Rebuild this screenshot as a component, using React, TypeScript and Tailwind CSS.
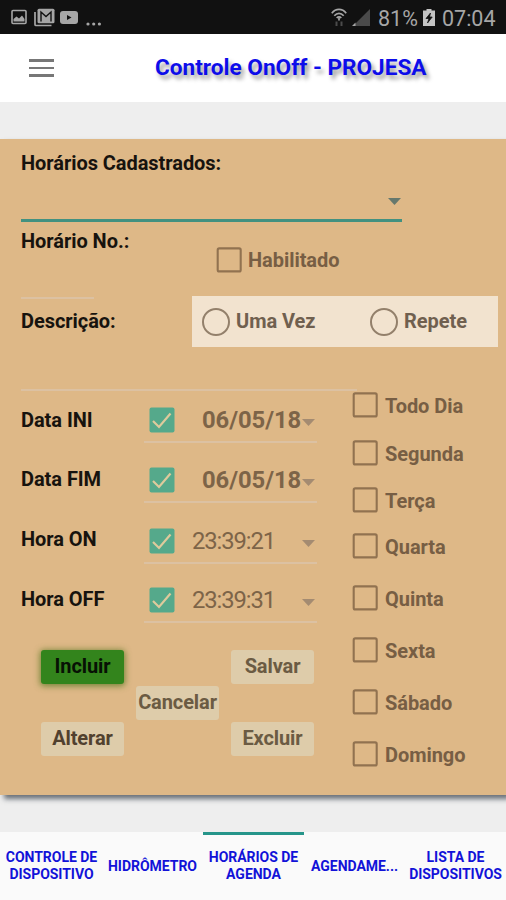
import React from 'react';
import clsx from 'clsx';

interface CheckBoxProps {
  checked?: boolean;
}

const CheckBox: React.FC<CheckBoxProps> = ({ checked }) => (
  <svg className="w-[26px] h-[26px] shrink-0" viewBox="0 0 26 26" fill="none">
    {checked ? (
      <>
        <rect x="0.5" y="0.5" width="25" height="25" rx="2" fill="#55a98b" />
        <path d="M4 14l6 6L21.5 6.5" stroke="#deca9c" strokeWidth="2.2" />
      </>
    ) : (
      <rect x="1.7" y="1.4" width="23" height="23" rx="1.5" stroke="#917250" strokeWidth="2.1" />
    )}
  </svg>
);

const Arrow: React.FC<{ className?: string }> = ({ className }) => (
  <svg className={clsx('w-[13px] h-[7px] shrink-0', className)} viewBox="0 0 13 7">
    <path d="M0 0h13L6.5 7z" fill="currentColor" />
  </svg>
);

const StatusBar: React.FC = () => (
  <div className="h-[34px] bg-[#111111] text-[#a6a6a6] flex items-center justify-between pl-[11px] pr-[10px]">
    <div className="flex items-center">
      {/* Picture */}
      <svg className="w-4 h-4" viewBox="0 0 16 16" fill="none">
        <rect x="1" y="1.5" width="14" height="13" rx="1" stroke="currentColor" strokeWidth="1.6" />
        <path d="M2.5 12.500V10l3-2.500L8 9.500l3-3L13.500 10v2.500z" fill="currentColor" />
      </svg>
      {/* Mail stack */}
      <svg className="w-[21px] h-[19px] ml-[7px]" viewBox="0 0 21 19" fill="none">
        <path d="M1 4v12.5a1 1 0 0 0 1 1h15.5" stroke="currentColor" strokeWidth="1.7" />
        <rect x="3.5" y="0.8" width="17" height="14.5" rx="1.5" fill="currentColor" />
        <path d="M7 13.500V4l5 4.500L17 4v9.500" stroke="#111111" strokeWidth="1.4" />
      </svg>
      {/* Video */}
      <svg className="w-[18px] h-[13px] ml-[5px]" viewBox="0 0 18 13">
        <rect width="18" height="13" rx="3" fill="currentColor" />
        <path d="M7 4v5l4.500-2.500z" fill="#111111" />
      </svg>
      <svg className="w-4 h-[14px] ml-[8px] mt-[4px]" viewBox="0 0 16 14" fill="currentColor">
        <circle cx="2" cy="12" r="1.6" />
        <circle cx="7.7" cy="12" r="1.6" />
        <circle cx="13.4" cy="12" r="1.6" />
      </svg>
    </div>
    <div className="flex items-center text-[21.5px] leading-none">
      {/* Wifi */}
      <svg className="w-4 h-[19px] mr-[5px]" viewBox="0 0 16 19" fill="none" stroke="currentColor" strokeWidth="1.7">
        <path d="M.8 5.2c4-5 10.400-5 14.400 0M3.300 7.800c2.800-3.200 6.600-3.200 9.400 0M5.700 10c1.400-1.500 3.200-1.500 4.600 0" />
        <path d="M8 9.500v3" />
        <path d="M5.500 18v-4.500M10.500 13.500V18" stroke="#4b4b4b" strokeWidth="2" />
      </svg>
      <svg className="w-[18px] h-[17px] mr-[8px]" viewBox="0 0 18 17">
        <path d="M18 0v17H1z" fill="#4a4a4a" />
        <path d="M3.500 13.500v3.500H0z" fill="#a6a6a6" />
      </svg>
      <span className="w-[39px] pt-1">81%</span>
      {/* Battery */}
      <svg className="w-3 h-[17px] ml-[6px] mr-[7px]" viewBox="0 0 12 17">
        <path d="M3.500 0h5v1.500H12V17H0V1.500h3.500z" fill="#c4c4c4" />
        <path d="M7.500 4L3 9.500h3L4.500 14 9.200 8H6.500z" fill="#111111" stroke="#111111" strokeWidth="0.8" />
      </svg>
      <span className="w-[54px] pt-1">07:04</span>
    </div>
  </div>
);

const PICKERS = [
  { label: 'Data INI', value: '06/05/18', time: false, row: 'h-[52px]', pad: 'pb-[11px]' },
  { label: 'Data FIM', value: '06/05/18', time: false, row: 'h-[60px]', pad: 'pb-[12px]' },
  { label: 'Hora ON', value: '23:39:21', time: true, row: 'h-[61px]', pad: 'pb-[13px]' },
  { label: 'Hora OFF', value: '23:39:31', time: true, row: 'h-[59px]', pad: 'pb-[12px]' },
];

const DAYS = [
  { name: 'Todo Dia', gap: 'mt-[1px]' },
  { name: 'Segunda', gap: 'mt-[22px]' },
  { name: 'Terça', gap: 'mt-[21px]' },
  { name: 'Quarta', gap: 'mt-[20px]' },
  { name: 'Quinta', gap: 'mt-[26px]' },
  { name: 'Sexta', gap: 'mt-[26px]' },
  { name: 'Sábado', gap: 'mt-[26px]' },
  { name: 'Domingo', gap: 'mt-[26px]' },
];

const TABS = ['CONTROLE DE DISPOSITIVO', 'HIDRÔMETRO', 'HORÁRIOS DE AGENDA', 'AGENDAME...', 'LISTA DE DISPOSITIVOS'];

interface ActionProps {
  label: string;
  className?: string;
}

const Action: React.FC<ActionProps> = ({ label, className }) => (
  <button className={clsx('w-[83px] h-[34px] rounded-[3px] font-bold text-[20px] tracking-[-0.100px] leading-none pb-0.5 whitespace-nowrap', className)}>
    {label}
  </button>
);

const App: React.FC = () => {
  return (
    <div className="w-[506px] h-[900px] bg-[#eeeeee] flex flex-col overflow-hidden font-['Roboto',sans-serif]">
      <StatusBar />

      <header className="h-[68px] bg-white flex items-center pl-[29px]">
        <button className="w-[25px] flex flex-col gap-[5px]">
          <span className="h-[2.500px] w-full bg-[#777777]" />
          <span className="h-[2.500px] w-full bg-[#777777]" />
          <span className="h-[2.500px] w-full bg-[#777777]" />
        </button>
        <h1 className="ml-[101px] text-[22.600px] font-bold text-[#0d0dea] whitespace-nowrap [text-shadow:3px_4px_4px_rgba(0,0,0,0.4)]">
          Controle OnOff - PROJESA
        </h1>
      </header>

      <main className="mt-[37px] h-[656px] bg-[#deb887] shadow-[4px_4px_5px_0px_rgba(60,70,80,0.75)] flex flex-col text-[20px] tracking-[-0.050px] leading-[24px] font-bold text-[#17130e]">
        {/* Registered schedules */}
        <section className="ml-[21px] w-[381px] h-[83px] pt-3 border-b-[3px] border-[#429180] flex flex-col">
          <span>Horários Cadastrados:</span>
          <Arrow className="self-end mt-[23px] mr-px text-[#66786d]" />
        </section>

        <section className="h-[126px] flex">
          <div className="w-[171px] ml-[21px] pt-[7px]">
            <div>Horário No.:</div>
            <div className="w-[73px] h-[2px] mt-[44px] bg-[#dcc1a2]" />
            <div className="mt-[10px]">Descrição:</div>
          </div>
          <div className="pt-[25px] text-[#775e44]">
            <label className="ml-[24px] flex items-center gap-[6px]">
              <CheckBox />
              Habilitado
            </label>
            <div className="mt-[23px] w-[306px] h-[51px] bg-[#f2e3cf] text-[#70604f] flex items-center pl-[10px]">
              <label className="w-[168px] flex items-center gap-[6px]">
                <span className="w-7 h-7 rounded-full border-2 border-[#93806b]" />
                <span className="pb-[2px]">Uma Vez</span>
              </label>
              <label className="flex items-center gap-[6px]">
                <span className="w-7 h-7 rounded-full border-2 border-[#93806b]" />
                <span className="pb-[2px]">Repete</span>
              </label>
            </div>
          </div>
        </section>

        <div className="ml-[21px] mt-[41px] w-[336px] h-[2px] bg-[#dcc1a2]" />

        <section className="flex">
          <div className="w-[352px]">
            {PICKERS.map((p) => (
              <div key={p.label} className={clsx('flex items-end pl-[21px]', p.row)}>
                <span className={clsx('w-[123px]', p.pad)}>{p.label}</span>
                <div className="w-[173px] h-[36px] border-b-2 border-[#dcc1a2] flex pl-[5px] pr-px text-[#7d6448]">
                  <CheckBox checked />
                  {p.time ? (
                    <span className="ml-[17px] mt-[1px] w-[110px] text-[23.800px] font-normal tracking-[-1.100px]">{p.value}</span>
                  ) : (
                    <span className="ml-[27px] mt-[1px] w-[100px] text-[23.800px] whitespace-nowrap">{p.value}</span>
                  )}
                  <Arrow className="mt-[12px] text-[#a48b71]" />
                </div>
              </div>
            ))}

            {/* Actions */}
            <div className="mt-[27px] ml-[41px] w-[273px] flex flex-col text-[#6b5b43]">
              <div className="flex justify-between">
                <Action label="Incluir" className="bg-[#33841c] text-[#071104] shadow-[0_1px_6px_1px_rgba(70,110,20,0.7)]" />
                <Action label="Salvar" className="bg-[#deccaa]" />
              </div>
              <Action label="Cancelar" className="bg-[#deccaa] ml-[95px] mt-[2px]" />
              <div className="mt-[2px] flex justify-between">
                <Action label="Alterar" className="bg-[#deccaa] text-[#51412f]" />
                <Action label="Excluir" className="bg-[#deccaa]" />
              </div>
            </div>
          </div>

          <div className="flex flex-col text-[#775e44]">
            {DAYS.map((day) => (
              <label key={day.name} className={clsx('flex items-center gap-[7px] h-[26px]', day.gap)}>
                <CheckBox />
                <span className="pt-[1px]">{day.name}</span>
              </label>
            ))}
          </div>
        </section>
      </main>

      <nav className="mt-auto h-[68px] pl-px bg-[#fafafa] grid grid-cols-5 text-[14px] leading-[17px] tracking-[-0.030px] font-bold text-[#1212d8] text-center">
        {TABS.map((tab, i) => (
          <button
            key={tab}
            className={clsx('flex items-center justify-center border-t-[3px] pb-[3px]', i === 2 ? 'border-[#26958a]' : 'border-transparent')}
          >
            {tab}
          </button>
        ))}
      </nav>
    </div>
  );
};

export default App;
